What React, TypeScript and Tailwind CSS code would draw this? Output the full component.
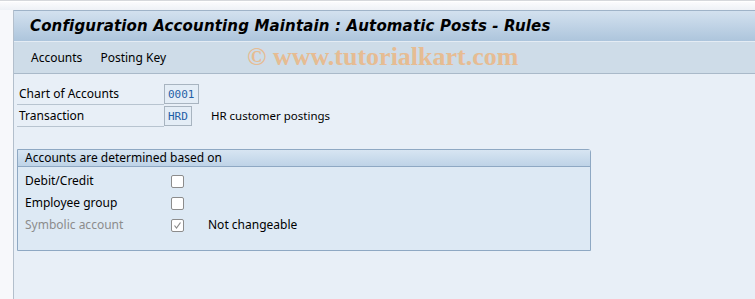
import React from "react";

const font = { fontFamily: "'Noto Sans', 'DejaVu Sans', sans-serif" };

function Check({ checked, disabled }: { checked?: boolean; disabled?: boolean }) {
  return (
    <div className="w-[13px] h-[13px] border border-[#8c8c8c] bg-white rounded-[2px] flex items-center justify-center">
      {checked && (
        <svg width="9" height="9" viewBox="0 0 9 9">
          <path d="M1.5 4.5 L3.5 7 L7.5 1.5" fill="none" stroke={disabled ? "#8a8a8a" : "#333"} strokeWidth="1.2" />
        </svg>
      )}
    </div>
  );
}

export default function App() {
  return (
    <div className="w-[755px] h-[299px] bg-[#f7f8fb] overflow-hidden relative text-[12px] leading-none" style={font}>
      <div className="h-[2px] border-t border-[#d6d8dc] bg-white" />
      <div className="h-[8px] bg-gradient-to-b from-[#fbfbfd] to-[#eef1f6]" />
      <div className="ml-[13px] h-[289px] border-l border-[#b3bfcc] bg-[#e8eff7] flex flex-col">
        <div className="h-[31px] border-t border-[#9fb3c8] bg-gradient-to-b from-[#d3e1ef] to-[#adc5dc] flex items-center pl-[16px] pt-[1px]">
          <span className="text-[15px] font-bold italic text-black tracking-[0.15px]" style={{ fontFamily: "'DejaVu Sans', sans-serif" }}>
            Configuration Accounting Maintain : Automatic Posts - Rules
          </span>
        </div>
        <div className="h-[33px] bg-[#cedce8] border-t border-[#e4ecf4] border-b border-b-[#a9b9c9] flex items-center pl-[17px] gap-[18px] text-black relative">
          <span>Accounts</span>
          <span>Posting Key</span>
          <span
            className="absolute left-[233px] top-[2px] text-[26px] leading-none font-bold text-[#e9b98a] opacity-90"
            style={{ fontFamily: "'Liberation Serif', serif" }}
          >
            © www.tutorialkart.com
          </span>
        </div>
        <div className="pt-[9px] pl-[3px] text-black">
          <div className="flex items-center h-[22px]">
            <div className="w-[147px] h-[22px] border-b border-[#b8c4d0] flex items-center pl-[2px]">Chart of Accounts</div>
            <div className="h-[20px] px-[3px] border border-[#a8b4c0] bg-[#e4edf6] text-[#1f5fa6] flex items-center text-[11px]" style={{ fontFamily: "'DejaVu Sans Mono', monospace" }}>
              0001
            </div>
          </div>
          <div className="flex items-center h-[22px]">
            <div className="w-[147px] h-[22px] border-b border-[#b8c4d0] flex items-center pl-[2px]">Transaction</div>
            <div className="h-[20px] px-[3px] border border-[#a8b4c0] bg-[#e4edf6] text-[#1f5fa6] flex items-center text-[11px]" style={{ fontFamily: "'DejaVu Sans Mono', monospace" }}>
              HRD
            </div>
            <span className="ml-[19px] text-[11.5px]">HR customer postings</span>
          </div>
          <div className="mt-[22px] w-[574px] h-[102px] border border-[#8ea8c3] bg-[#dde9f4] rounded-tr-[3px]">
            <div className="h-[17px] bg-gradient-to-b from-[#d7e5f2] to-[#bed3e7] border-b border-[#8ea8c3] flex items-center pl-[7px]">
              Accounts are determined based on
            </div>
            <div className="pl-[7px] pt-[3px]">
              <div className="flex items-center h-[22px]">
                <span className="w-[146px]">Debit/Credit</span>
                <Check />
              </div>
              <div className="flex items-center h-[22px]">
                <span className="w-[146px]">Employee group</span>
                <Check />
              </div>
              <div className="flex items-center h-[22px]">
                <span className="w-[146px] text-[#8c8c8c]">Symbolic account</span>
                <Check checked disabled />
                <span className="ml-[24px]">Not changeable</span>
              </div>
            </div>
          </div>
        </div>
      </div>
    </div>
  );
}
